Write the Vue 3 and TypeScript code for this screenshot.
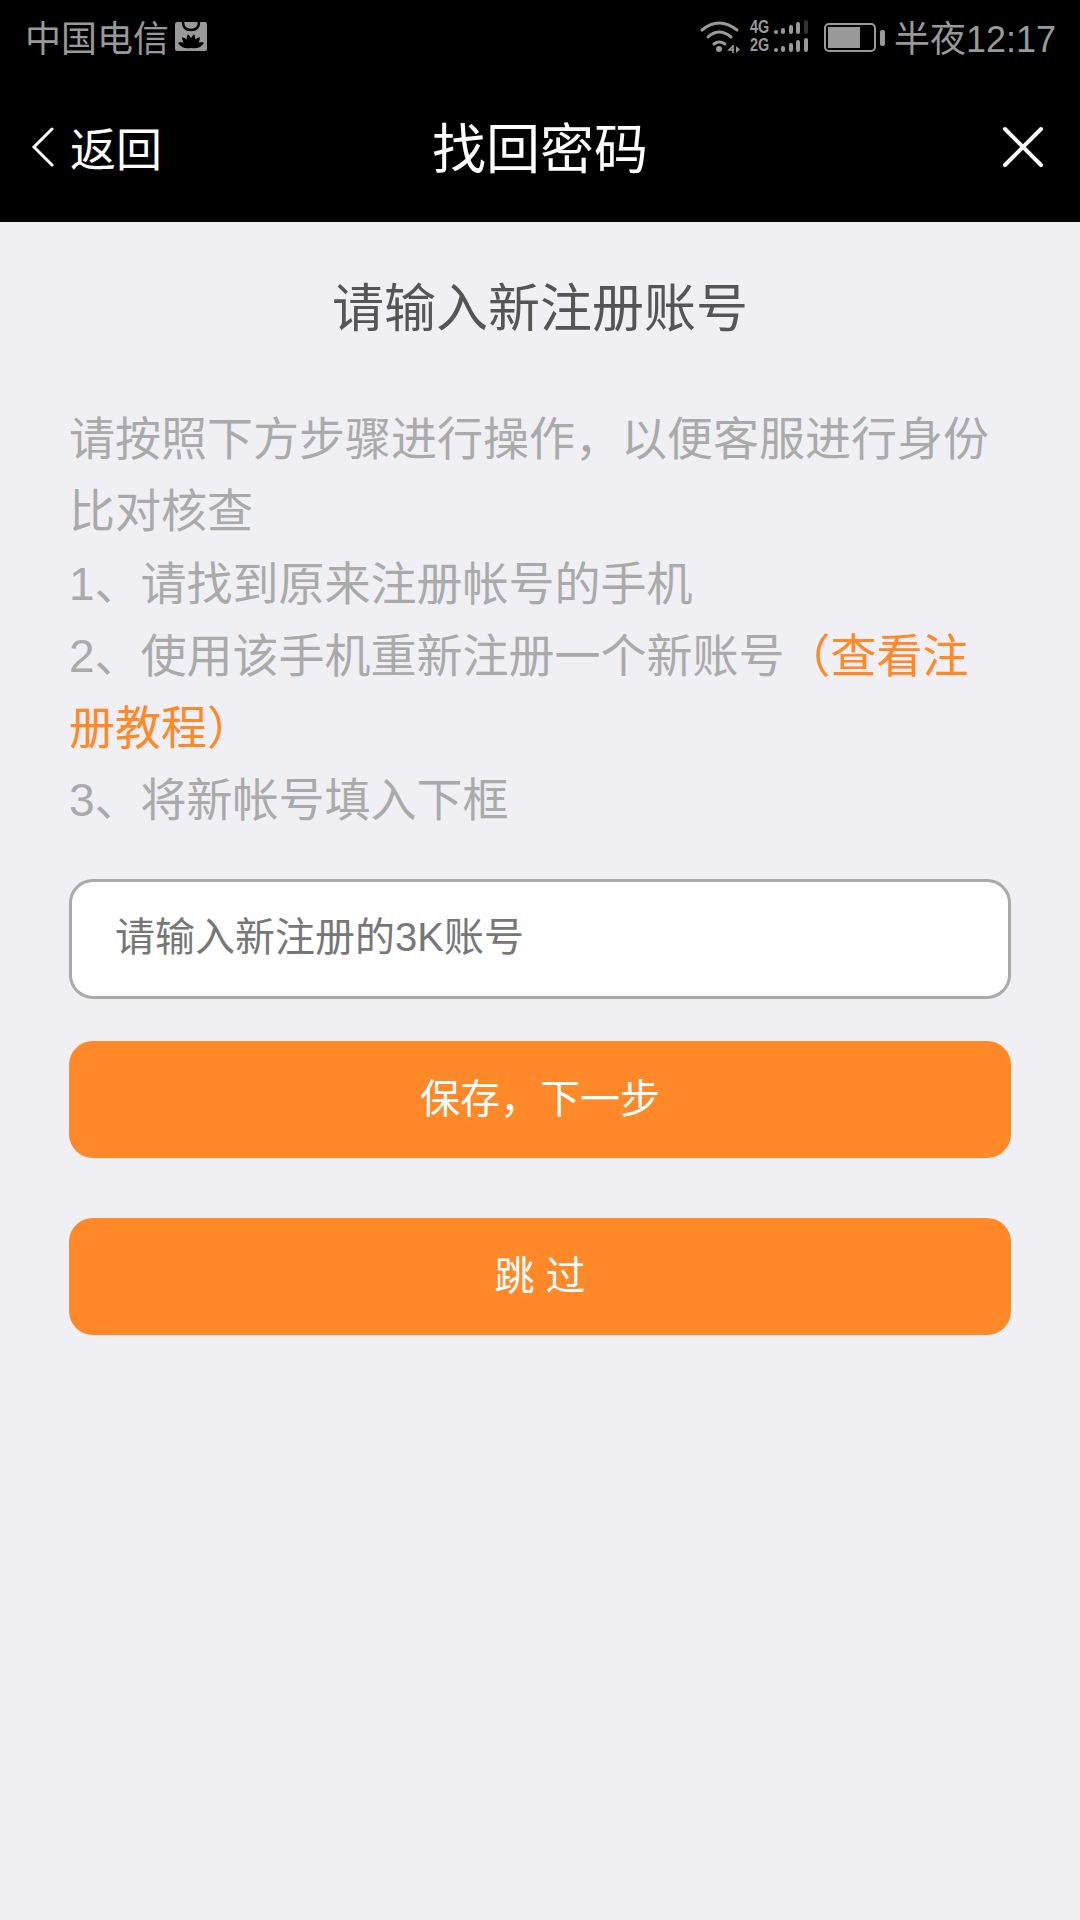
<script setup lang="ts">
const petals = [-68, -40, -13, 13, 40, 68]
const bars = [4, 6, 9, 12, 14]
</script>

<template>
  <div class="page">
    <header class="top">
      <div class="status">
        <div class="carrier">
          <span>中国电信</span>
          <svg width="32" height="29" viewBox="0 0 32 29">
            <rect width="32" height="29" rx="2" fill="#999" />
            <path d="M8 0c0 6 3.500 8 8 8s8-2 8-8" fill="none" stroke="#000" stroke-width="2.500" />
            <g fill="#000">
              <path v-for="a in petals" :key="a" d="M16 26C12.800 21 12.800 16 16 12C19.200 16 19.200 21 16 26z" :transform="`rotate(${a} 16 26)`" />
            </g>
          </svg>
        </div>
        <div class="indicators">
          <svg width="40" height="33" viewBox="0 0 40 33" fill="none" stroke="#999" stroke-linecap="round" stroke-width="3">
            <path d="M2 10Q19 -4 37 10" />
            <path d="M8 17Q19 7 31 17" />
            <path d="M14 24Q19 20 25 24" />
            <circle cx="19" cy="29" r="3" fill="#999" stroke="none" />
            <path d="M33 25v8M33 26l-4 4h5" stroke-width="1.600" stroke-linecap="butt" />
            <path d="M36 26v7l4-3.500z" fill="#999" stroke="none" />
          </svg>
          <div class="signal">
            <div v-for="(row, r) in ['4G', '2G']" :key="row" class="signal-row">
              <span class="gen">{{ row }}</span>
              <i v-for="(h, n) in bars" :key="n" class="bar" :class="{ off: r === 0 && n === 4 }" :style="{ height: `${h}px` }" />
            </div>
          </div>
          <div class="battery">
            <div class="cell"><div class="level" /></div>
            <div class="nub" />
          </div>
          <span class="time">半夜12:17</span>
        </div>
      </div>
      <nav class="nav">
        <div class="back">
          <svg width="24" height="40" viewBox="0 0 24 40" fill="none" stroke="#fff" stroke-width="3" stroke-linecap="round">
            <path d="M21 2L3 20l18 18" />
          </svg>
          <span class="back-label">返回</span>
        </div>
        <span class="nav-title">找回密码</span>
        <svg width="42" height="42" viewBox="0 0 42 42" stroke="#fff" stroke-width="4" stroke-linecap="round">
          <path d="M3 3l36 36M39 3L3 39" />
        </svg>
      </nav>
    </header>

    <main class="content">
      <h1 class="heading">请输入新注册账号</h1>
      <div class="steps">
        <p>请按照下方步骤进行操作，以便客服进行身份比对核查</p>
        <p>1、请找到原来注册帐号的手机</p>
        <p>2、使用该手机重新注册一个新账号<span class="link">（查看注册教程）</span></p>
        <p>3、将新帐号填入下框</p>
      </div>
      <div class="input">请输入新注册的3K账号</div>
      <button class="btn first">保存，下一步</button>
      <button class="btn second">跳 过</button>
    </main>
  </div>
</template>

<style>
html, body {
  margin: 0;
  background: #efeff4;
}
</style>

<style scoped>
.page {
  width: 1080px;
  height: 1920px;
  background: #efeff4;
  font-family: "Liberation Sans", "Noto Sans CJK SC", sans-serif;
  overflow: hidden;
}
.top {
  height: 222px;
  background: #000;
}
.status {
  height: 72px;
  padding: 0 24px 0 25px;
  display: flex;
  align-items: center;
  justify-content: space-between;
  color: #999;
  font-size: 36px;
}
.carrier {
  display: flex;
  align-items: center;
  gap: 6px;
}
.indicators {
  display: flex;
  align-items: center;
}
.signal {
  margin-left: 10px;
  display: flex;
  flex-direction: column;
  gap: 4px;
}
.signal-row {
  display: flex;
  align-items: flex-end;
  gap: 3.500px;
  height: 14px;
}
.gen {
  width: 20px;
  font-size: 18px;
  line-height: 14px;
  font-weight: 700;
  transform: scaleX(0.8);
  transform-origin: left center;
}
.bar {
  width: 4px;
  background: #999;
  border-radius: 2px;
}
.bar.off {
  background: #333;
}
.battery {
  margin: 3px 0 0 16px;
  display: flex;
  align-items: center;
  gap: 4px;
}
.cell {
  width: 52px;
  height: 29px;
  box-sizing: border-box;
  border: 2px solid #999;
  border-radius: 5px;
  padding: 2px;
}
.level {
  width: 32px;
  height: 21px;
  background: #999;
}
.nub {
  width: 5px;
  height: 16px;
  background: #999;
  border-radius: 2px;
}
.time {
  margin-left: 9px;
}
.nav {
  height: 150px;
  padding: 0 36px 0 31px;
  display: flex;
  align-items: center;
  justify-content: space-between;
  position: relative;
  color: #fff;
}
.back {
  display: flex;
  align-items: center;
  gap: 15px;
  font-size: 46px;
}
.back-label {
  padding-bottom: 2px;
}
.nav-title {
  position: absolute;
  left: 0;
  right: 0;
  padding-bottom: 3px;
  text-align: center;
  font-size: 54px;
}
.content {
  padding: 0 69px;
  display: flex;
  flex-direction: column;
}
.heading {
  margin: 0;
  padding-top: 53px;
  text-align: center;
  font-size: 52px;
  line-height: 68px;
  font-weight: 400;
  color: #555;
}
.steps {
  margin-top: 60px;
  width: 930px;
  font-size: 46px;
  line-height: 72.300px;
  color: #aaa;
}
.steps p {
  margin: 0;
}
.link {
  color: #ff8829;
}
.input {
  margin-top: 42px;
  height: 120px;
  box-sizing: border-box;
  border: 3px solid #aaa;
  border-radius: 24px;
  background: #fff;
  padding: 0 43px 9px;
  display: flex;
  align-items: center;
  font-size: 40px;
  color: #777;
}
.btn {
  height: 117px;
  border: none;
  border-radius: 24px;
  background: #ff8829;
  color: #fff;
  font-family: inherit;
  font-size: 40px;
  padding: 0 0 6px;
}
.first {
  margin-top: 42px;
}
.second {
  margin-top: 60px;
}
</style>
